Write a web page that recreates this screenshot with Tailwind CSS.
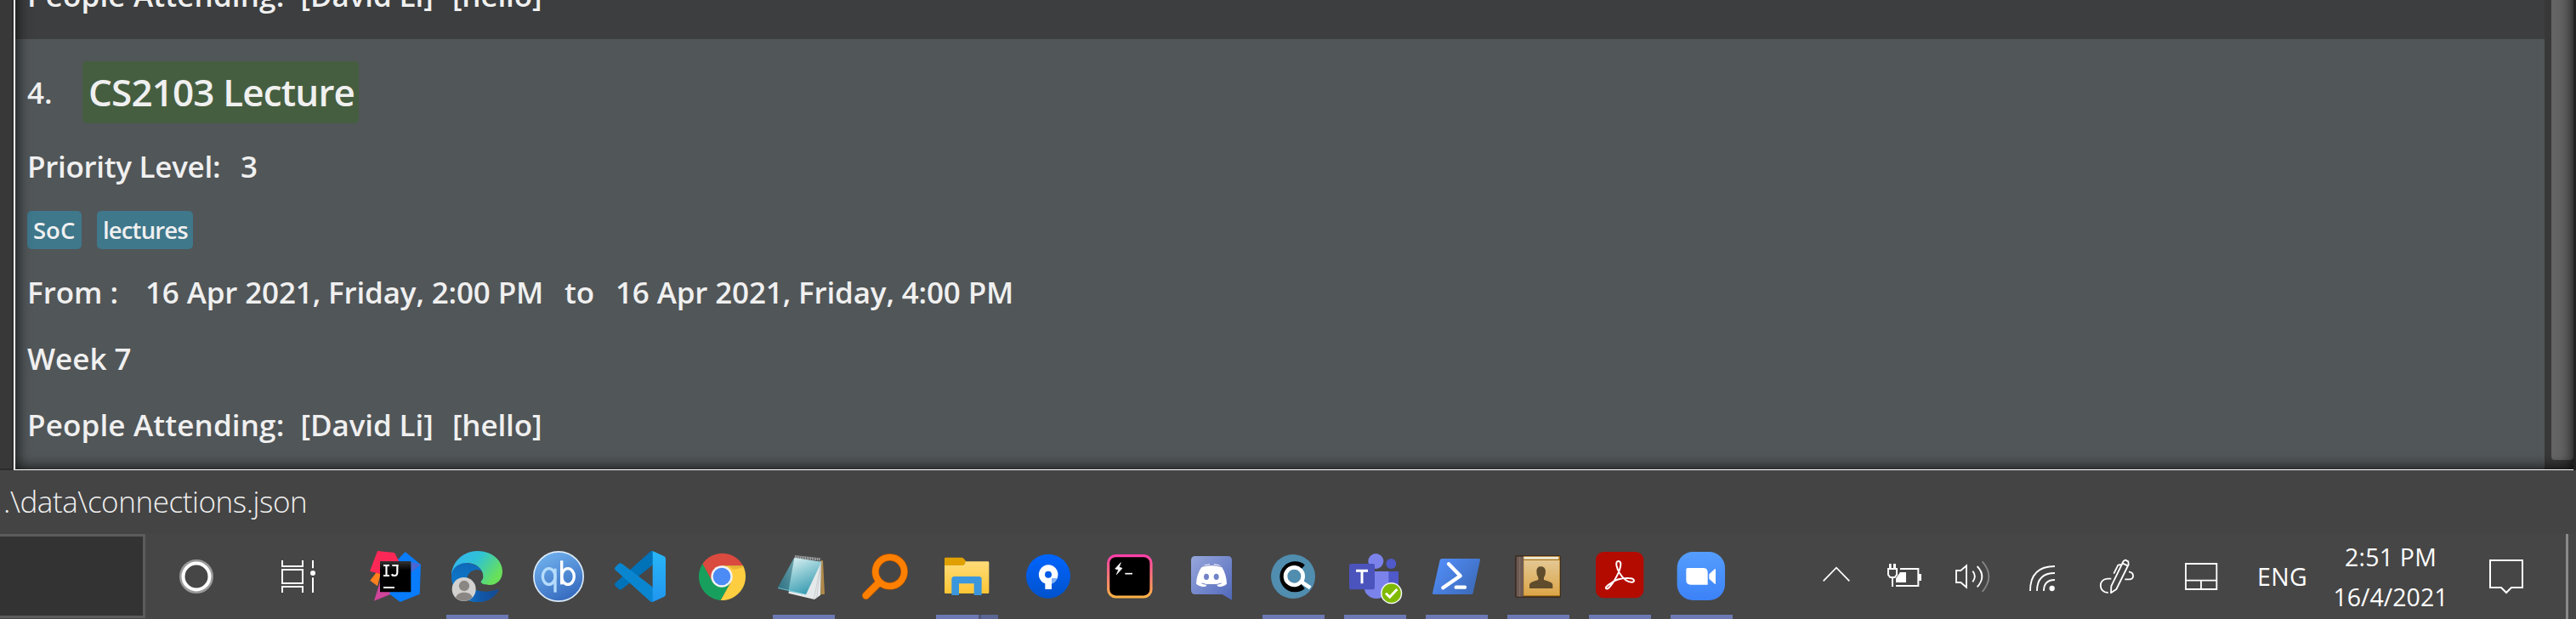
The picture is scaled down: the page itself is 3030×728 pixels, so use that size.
<!DOCTYPE html>
<html lang="en">
<head>
<meta charset="utf-8">
<title>Schedule</title>
<script src="https://cdn.jsdelivr.net/npm/@tailwindcss/browser@4"></script>
</head>
<body class="w-[3030px] h-[728px] overflow-hidden bg-[#444444] font-['Open_Sans','Noto_Sans',sans-serif] text-[#f0f0f0]">
<div class="flex flex-col w-[3030px] h-[728px]">

  <!-- Event list -->
  <main class="flex h-[553px] shrink-0 overflow-hidden">
    <div class="w-4 shrink-0 bg-[#383838] border-r-2 border-b-2 border-[#2c2c2c]"></div>
    <section class="relative flex w-[3011px] h-[553px] border-l-2 border-b border-white overflow-hidden font-semibold text-[35px] leading-[48px] whitespace-nowrap">
      <div class="w-[2975px] shrink-0">
        <div class="h-[46px] bg-[#3c3e3f] overflow-hidden pl-[14px]">
          <div class="flex -mt-[29px]"><span class="w-[321.5px] tracking-[0.15px]">People Attending:</span><span class="w-[178.5px] tracking-[-0.1px]">[David Li]</span><span class="tracking-[-0.15px]">[hello]</span></div>
        </div>
        <div class="h-[506px] bg-[#515658] pl-[14px] pt-[26px]">
          <div class="flex items-center h-[73px]"><span class="w-[65px]">4.</span><span class="h-[73px] w-[325px] rounded-[5px] bg-[#455e40] pl-[7px] text-[44px] leading-[73px] tracking-[-0.85px]">CS2103 Lecture</span></div>
          <div class="flex mt-[27px]"><span class="w-[251px] tracking-[-0.3px]">Priority Level:</span><span>3</span></div>
          <div class="flex mt-7 gap-[18px] text-[27.5px] leading-[45px]"><span class="w-16 h-[45px] rounded-[5px] bg-[#3f778b] pl-[7px]">SoC</span><span class="w-[113px] h-[45px] rounded-[5px] bg-[#3f778b] pl-[7px] tracking-[-0.85px]">lectures</span></div>
          <div class="flex mt-[27px]"><span class="w-[139px]">From :</span><span class="w-[493px] tracking-[-0.15px]">16 Apr 2021, Friday, 2:00 PM</span><span class="w-[60px]">to</span><span class="tracking-[-0.15px]">16 Apr 2021, Friday, 4:00 PM</span></div>
          <div class="flex mt-[30px]">Week 7</div>
          <div class="flex mt-[30px]"><span class="w-[321.5px] tracking-[0.15px]">People Attending:</span><span class="w-[178.5px] tracking-[-0.1px]">[David Li]</span><span class="tracking-[-0.15px]">[hello]</span></div>
        </div>
      </div>
      <div class="w-[34px] shrink-0 bg-[#383838] pl-2"><div class="w-[26px] h-[541px] rounded-b-[4px] bg-[#646464]"></div></div>
      <div class="absolute -top-10 bottom-0 left-0 right-0 shadow-[inset_0_0_16px_2px_rgba(0,0,0,0.75)]"></div>
    </section>
    <div class="w-[3px] bg-[#222222]"></div>
  </main>

  <!-- Status bar -->
  <footer class="flex items-center h-[75px] shrink-0 pl-1 bg-[#444444] text-[35px] font-light tracking-[-0.42px]">.\data\connections.json</footer>

  <!-- Taskbar -->
  <nav class="flex h-[100px] shrink-0 bg-[#464646] text-white">
    <div class="w-[171px] h-[99px] shrink-0 border-[3px] border-l-0 border-[#5c5c5c] bg-[#333333]"></div>
    <div class="flex w-[246px] shrink-0 pt-5">
      <svg class="ml-[30px] w-[60px] h-[60px] shrink-0" viewBox="0 0 60 60" fill="none"><circle cx="30" cy="30" r="18.5" stroke="#999" stroke-width="3"/><circle cx="30" cy="30" r="15.5" stroke="#fff" stroke-width="4"/></svg>
      <svg class="ml-[60px] w-[60px] h-[60px] shrink-0" viewBox="963 114 180 180" fill="none" stroke="#fff" stroke-width="6"><path d="M996 117v21h72v-21M996 150h72v48h-72zM996 231v-21h72v21M1104 117v28M1104 178v53" transform="translate(0 30)"/><circle cx="1104" cy="192" r="9" fill="#fff" stroke="none"/></svg>
    </div>

    <div class="flex shrink-0">
      <!-- IntelliJ IDEA -->
      <div class="flex flex-col items-center w-24 pt-5">
        <svg class="w-[60px] h-[60px]" viewBox="45 84 180 180"><defs><linearGradient id="ijb" x1="0" y1="0" x2="0" y2="1"><stop offset="0" stop-color="#333"/><stop offset=".3" stop-color="#000"/></linearGradient></defs>
        <path d="M68 160 46 188 72 208 84 160z" fill="#fc801d"/><path d="M82 190 60 260 125 234z" fill="#d0459c"/><path d="M170 87 225 132 221 236 152 264 115 236 140 118z" fill="#087cfa"/><path d="M72 84 132 90 158 140 84 166 45 155z" fill="#fe2857"/><path d="M190 122 225 132 190 160z" fill="#5a62c8" opacity=".8"/><path d="M81 120h109v109H81z" fill="url(#ijb)"/><path d="M93 135h21M93 171h21M103.500 135v36M124 135h22M142 135v24q0 12-10 12-7 0-10-5" fill="none" stroke="#fff" stroke-width="6.500"/><path d="M93 210h39v6H93z" fill="#fff"/></svg>
      </div>
      <!-- Edge -->
      <div class="flex flex-col items-center w-24 pt-5">
        <svg class="w-[60px] h-[60px]" viewBox="333 84 180 180"><defs><linearGradient id="ea" x1="0" y1="0" x2="1" y2=".5"><stop offset="0" stop-color="#35b1f5"/><stop offset=".5" stop-color="#2fc3d6"/><stop offset="1" stop-color="#68e05a"/></linearGradient><linearGradient id="eb" x1="0" y1="0" x2="0" y2="1"><stop offset="0" stop-color="#1068b8"/><stop offset="1" stop-color="#0a87dc"/></linearGradient><linearGradient id="ec" x1="0" y1="0" x2="1" y2="0"><stop offset="0" stop-color="#0b7bd8"/><stop offset=".5" stop-color="#1157a8"/><stop offset="1" stop-color="#154a92"/></linearGradient></defs>
        <path d="M333 172C330 140 352 124 385 126c30 2 52 16 56 30-24-12-56 4-50 34 6 40 60 50 108 28-12 30-42 46-74 46-52 0-92-40-92-92z" fill="url(#eb)"/><path d="M390 172c-10 38 30 58 68 55 20 0 35-8 41-8 2 0 1 3 0 5-14 26-42 40-74 40-20 0-48-14-52-46z" fill="url(#ec)"/><path d="M388 184c0-18 14-32 34-34 14 0 22 10 22 24 0 12-8 14-8 20 0 4 6 8 14 10-24 10-58 4-62-20z" fill="#454749"/><path d="M333 168c4-50 44-84 92-84 52 0 88 34 88 72 0 30-20 48-46 48-16 0-30-4-30-11 0-4 8-7 8-19 0-28-26-48-58-48-28 0-50 16-54 42z" fill="url(#ea)"/><circle cx="377" cy="219" r="42" fill="#d3d1cf"/><circle cx="378" cy="207" r="18.500" fill="#8a8683"/><path d="M348 248c4-12 16-18 30-18s26 6 29 18c-16 16-42 17-59 0z" fill="#8a8683"/></svg>
        <div class="mt-[15px] w-[73px] h-[5px] bg-[#6c79b4]"></div>
      </div>
      <!-- qBittorrent -->
      <div class="flex flex-col items-center w-24 pt-5">
        <svg class="w-[60px] h-[60px]" viewBox="621 84 180 180"><defs><linearGradient id="qb" x1=".2" y1="0" x2=".7" y2="1"><stop offset="0" stop-color="#72b3ef"/><stop offset="1" stop-color="#3468bd"/></linearGradient></defs><circle cx="711" cy="174" r="87.500" fill="url(#qb)" stroke="#dcebf8" stroke-width="5"/><g fill="none" stroke-width="10"><path d="M699 146v84" stroke="#b5dcfb"/><ellipse cx="677" cy="174" rx="22" ry="28" stroke="#b5dcfb"/><path d="M722 118v84" stroke="#fff"/><ellipse cx="744" cy="174" rx="22" ry="28" stroke="#fff"/></g></svg>
      </div>
      <!-- VS Code -->
      <div class="flex flex-col items-center w-24 pt-5">
        <svg class="w-[60px] h-[60px]" viewBox="39 84 180 180"><defs><linearGradient id="vs" x1="0" y1="0" x2="0" y2="1"><stop offset="0" stop-color="#29b6f6"/><stop offset="1" stop-color="#2196f0"/></linearGradient></defs><path d="M166 85q4-2 8 0v48L64 219q-5 4-10 0l-13-12q-4-5 0-10z" fill="#0072b8"/><path d="M41 151q-4-5 0-10l13-13q5-3 10 0l110 84v51q-4 2-8 0z" fill="#0a86d1"/><path d="M173 84 214 103q5 3 5 8v126q0 5-5 8l-41 19z" fill="url(#vs)"/></svg>
      </div>
      <!-- Chrome -->
      <div class="flex flex-col items-center w-24 pt-5">
        <svg class="w-[60px] h-[60px]" viewBox="327 84 180 180"><path d="M349 129 380 188 417 174 417 136 492 136A84 84 0 0 0 349 129z" fill="#db4a3f"/><path d="M349 129A84 84 0 0 0 413 258L446 200 417 174 384 192z" fill="#17a05d"/><path d="M492 136A84 84 0 0 1 413 258L450 192 417 136z" fill="#ffcd40"/><path d="M440 136h52l2 6-36 8z" fill="#d9a52c" opacity=".6"/><circle cx="417" cy="174" r="38" fill="#f3f3f3"/><circle cx="417" cy="174" r="31" fill="#4c8bf5"/></svg>
      </div>
      <!-- Notepad -->
      <div class="flex flex-col items-center w-24 pt-5">
        <svg class="w-[60px] h-[60px]" viewBox="615 84 180 180"><defs><linearGradient id="np" x1="0" y1="0" x2=".4" y2="1"><stop offset="0" stop-color="#e2f4f6"/><stop offset=".5" stop-color="#8cc9d3"/><stop offset="1" stop-color="#3f9fb4"/></linearGradient><linearGradient id="nq" x1="1" y1="0" x2="0" y2="1"><stop offset="0" stop-color="#a9cdd2"/><stop offset="1" stop-color="#1d5f70"/></linearGradient></defs><path d="M766 118 774 118 780 236 766 238z" fill="#b08a4a"/><path d="M768 120 765 240 744 255 652 233 660 205z" fill="#e6e9ea"/><path d="M768 124 742 254 M768 124 752 250" stroke="#b9c0c2" stroke-width="2"/><path d="M673 107 668 226 615 214z" fill="url(#nq)"/><path d="M673 107 769 122 714 238 652 226z" fill="url(#np)"/><path d="M673 107 652 226 617 218 615 212z" fill="#387f8f" opacity=".55"/><path d="M676 104 766 114" stroke="#c9cdcf" stroke-width="10" stroke-dasharray="3 3"/><path d="M615 214 714 238" stroke="#8bdbe9" stroke-width="2"/></svg>
        <div class="mt-[15px] w-[73px] h-[5px] bg-[#6c79b4]"></div>
      </div>
      <!-- Everything search -->
      <div class="flex flex-col items-center w-24 pt-5">
        <svg class="w-[60px] h-[60px]" viewBox="33 84 180 180" fill="none"><g stroke="#b35300" stroke-linecap="round"><path d="M56 241 101 196" stroke-width="28"/><circle cx="140" cy="157" r="51" stroke-width="26"/></g><g stroke="#ff8000" stroke-linecap="round"><path d="M56 241 101 196" stroke-width="24"/><circle cx="140" cy="157" r="51" stroke-width="22"/></g></svg>
      </div>
      <!-- File Explorer -->
      <div class="flex flex-col items-center w-24 pt-5">
        <svg class="w-[60px] h-[60px]" viewBox="321 84 180 180"><defs><linearGradient id="fe" x1="0" y1="0" x2="0" y2="1"><stop offset="0" stop-color="#ffdc78"/><stop offset="1" stop-color="#fcc535"/></linearGradient></defs><path d="M333 111q0-4 4-4h56q5 0 8 4l8 10-8 14h-68z" fill="#dfa000"/><path d="M333 135h62q5 0 8-4l5-10h78q4 0 4 4v105q0 4-4 4H337q-4 0-4-4z" fill="url(#fe)"/><path d="M358 240v-56q0-10 10-10h86q10 0 10 10v56h-27v-41h-53v41z" fill="#3a96dd"/></svg>
        <div class="mt-[15px] flex gap-[3px] w-[73px] h-[5px] bg-[#4d5478]"><div class="w-[50px] bg-[#6c79b4]"></div><div class="w-5 bg-[#5b6694]"></div></div>
      </div>
      <!-- Sourcetree -->
      <div class="flex flex-col items-center w-24 pt-5">
        <svg class="w-[60px] h-[60px]" viewBox="609 84 180 180"><defs><linearGradient id="st" x1="0" y1="0" x2="0" y2="1"><stop offset="0" stop-color="#0065ff"/><stop offset="1" stop-color="#0052cc"/></linearGradient></defs><circle cx="699" cy="173" r="78" fill="url(#st)"/><path d="M688 219v-20a34 34 0 1 1 23 0v20z" fill="#fff"/><path d="M711 180h20a34 34 0 0 1-20 20z" fill="#7fb0f8"/><circle cx="699" cy="167" r="12" fill="#005be6"/></svg>
      </div>
      <!-- Hyper -->
      <div class="flex flex-col items-center w-24 pt-5">
        <svg class="w-[60px] h-[60px]" viewBox="27 84 180 180"><defs><linearGradient id="hy" x1="0" y1="0" x2="0" y2="1"><stop offset="0" stop-color="#ff3fa8"/><stop offset="1" stop-color="#ffb347"/></linearGradient></defs><rect x="41" y="101" width="151" height="145" rx="26" fill="#000" stroke="url(#hy)" stroke-width="9.500"/><path d="M85 125 65 147 77 150 70 167 90 145 79 141z" fill="#fff" stroke="#fff" stroke-width="2"/><path d="M100 164h26" stroke="#fff" stroke-width="5"/></svg>
      </div>
      <!-- Discord -->
      <div class="flex flex-col items-center w-24 pt-5">
        <svg class="w-[60px] h-[60px]" viewBox="315 84 180 180"><defs><linearGradient id="dc" x1="0" y1="0" x2="1" y2="1"><stop offset="0" stop-color="#97a7dc"/><stop offset="1" stop-color="#5068bb"/></linearGradient></defs><path d="M348 102h114q15 0 15 15v140l-34-20h-95q-15 0-15-15V117q0-15 15-15z" fill="url(#dc)"/><path d="M372 138q10-7 26-8l2 4h12l2-4q16 1 26 8 18 28 19 62-10 10-30 10l-8-9h-30l-8 9q-20 0-32-10 1-34 21-62z" fill="#fff"/><path d="M368 140q36-12 74 0M370 198q36 12 70 0" stroke="#7384c4" stroke-width="3" fill="none"/><ellipse cx="387" cy="175" rx="9" ry="11" fill="#7083c8"/><ellipse cx="422" cy="175" rx="9" ry="11" fill="#7083c8"/></svg>
      </div>
      <!-- C search -->
      <div class="flex flex-col items-center w-24 pt-5">
        <svg class="w-[60px] h-[60px]" viewBox="603 84 180 180" fill="none"><circle cx="693" cy="174" r="78" fill="#508daf"/><path d="M728 141A44 44 0 1 0 728 209" stroke="#000" stroke-width="20"/><circle cx="697" cy="173" r="31" stroke="#fff" stroke-width="14" fill="#508daf"/><path d="M718 190 754 214" stroke="#fff" stroke-width="14"/></svg>
        <div class="mt-[15px] w-[73px] h-[5px] bg-[#6c79b4]"></div>
      </div>
      <!-- Teams -->
      <div class="flex flex-col items-center w-24 pt-5">
        <svg class="w-[64px] h-[60px] shrink-0" viewBox="885 84 192 180" overflow="visible"><circle cx="1039" cy="129" r="18" fill="#5059c9"/><path d="M1020 156h45v62q-10 20-45 14z" fill="#5059c9"/><circle cx="985" cy="120" r="27" fill="#7b83eb"/><path d="M944 156h86v56a43 40 0 0 1-86 0z" fill="#7b83eb"/><rect x="891" y="129" width="90" height="91" rx="7" fill="#4b53bc"/><path d="M915 154h42M936 154v45" stroke="#fff" stroke-width="9"/><circle cx="1040" cy="233" r="35.500" fill="#7fba00" stroke="#f4f4f4" stroke-width="4.500"/><path d="M1020 233 1034 247 1060 219" stroke="#fff" stroke-width="8.500" fill="none"/></svg>
        <div class="mt-[15px] w-[73px] h-[5px] bg-[#6c79b4]"></div>
      </div>
      <!-- PowerShell -->
      <div class="flex flex-col items-center w-24 pt-5">
        <svg class="w-[60px] h-[60px]" viewBox="69 84 180 180"><defs><linearGradient id="ps" x1="0" y1="0" x2="1" y2=".6"><stop offset="0" stop-color="#5391fe"/><stop offset="1" stop-color="#3e6dbf"/></linearGradient></defs><path d="M109 111h130q5 0 4 5l-25 116q-1 5-6 5H79q-5 0-4-5l26-116q2-5 8-5z" fill="url(#ps)"/><path d="M132 130 173 172 112 214M158 212h31" fill="none" stroke="#fff" stroke-width="13" stroke-linecap="round" stroke-linejoin="round"/></svg>
        <div class="mt-[15px] w-[73px] h-[5px] bg-[#6c79b4]"></div>
      </div>
      <!-- Address book -->
      <div class="flex flex-col items-center w-24 pt-5">
        <svg class="w-[60px] h-[60px]" viewBox="357 84 180 180"><defs><linearGradient id="ab" x1="0" y1="0" x2="0" y2="1"><stop offset="0" stop-color="#e3c793"/><stop offset="1" stop-color="#dca548"/></linearGradient></defs><rect x="366" y="99" width="162" height="150" rx="6" fill="#3a2c22"/><path d="M395 102h130v142H395z" fill="#a56f10"/><path d="M397 104h123v9H397z" fill="#f1ead9"/><path d="M397 117h126v124H397z" fill="url(#ab)"/><path d="M371 104h25v141h-25z" fill="#6d5a53"/><path d="M383 104v141" stroke="#867169" stroke-width="3"/><path d="M457 139q16 0 17 17 0 15-6 22v8q28 7 31 16v14h-82v-14q3-9 31-16v-8q-6-7-6-22 0-17 15-17z" fill="#5f4c2c"/></svg>
        <div class="mt-[15px] w-[73px] h-[5px] bg-[#6c79b4]"></div>
      </div>
      <!-- Acrobat -->
      <div class="flex flex-col items-center w-24 pt-5">
        <svg class="w-[60px] h-[60px]" viewBox="645 84 180 180"><rect x="651" y="87" width="169" height="163" rx="28" fill="#b30b00"/><path d="M731 120C718 120 724 146 737 165 748 182 764 194 778 194 790 194 790 180 768 180 744 179 718 186 704 198 690 208 684 212 687 216 693 222 706 206 718 186 732 162 740 142 739 128 738 122 735 120 731 120z" fill="none" stroke="#fff" stroke-width="6"/></svg>
        <div class="mt-[15px] w-[73px] h-[5px] bg-[#6c79b4]"></div>
      </div>
      <!-- Zoom -->
      <div class="flex flex-col items-center w-24 pt-5">
        <svg class="w-[60px] h-[60px]" viewBox="930 84 180 180"><defs><linearGradient id="zm" x1="0" y1="0" x2="0" y2="1"><stop offset="0" stop-color="#559dfd"/><stop offset="1" stop-color="#3c82f8"/></linearGradient></defs><rect x="935" y="87" width="169" height="171" rx="56" fill="url(#zm)"/><path d="M972 144h55q16 0 16 16v43h-60q-16 0-16-16v-38q0-5 5-5zM1048 166 1066 149q5-4 5 1v48q0 5-5 1l-18-17z" fill="#fff"/></svg>
        <div class="mt-[15px] w-[73px] h-[5px] bg-[#6c79b4]"></div>
      </div>
    </div>

    <!-- Notification area -->
    <div class="flex shrink-0 w-[981px] pl-[87px]">
      <svg class="mt-5 w-12 h-[60px] shrink-0" viewBox="48 84 144 180" fill="none" stroke="#fff" stroke-width="5"><path d="M74 190 120 143 166 190"/></svg>
      <svg class="ml-8 mt-5 w-12 h-[60px] shrink-0" viewBox="288 84 144 180" fill="none" stroke="#fff" stroke-width="6"><path d="M345 147h64v60h-79"/><path d="M411 165h9v24h-9z" fill="#fff" stroke="none"/><path d="M303 147h30v21l-7 9h-16l-7-9zM318 177v33"/><path d="M306 129h8v16h-8zM321 129h9v16h-9zM345 159h21v36h-36v-14z" fill="#fff" stroke="none"/></svg>
      <svg class="ml-8 mt-5 w-12 h-[60px] shrink-0" viewBox="528 84 144 180" fill="none" stroke="#fff" stroke-width="5.500"><path d="M543 153h16l20-17v76l-20-17h-16z"/><path d="M601 155q15 18 0 38M617 138q34 36 0 73"/><path d="M635 121q46 53 0 107" stroke="#858585"/></svg>
      <svg class="ml-8 mt-5 w-12 h-[60px] shrink-0" viewBox="768 84 144 180" fill="none" stroke="#fff" stroke-width="5.500"><path d="M804 225q0-87 87-87M828 225q0-63 63-63M852 225q0-39 39-39"/><circle cx="881" cy="216" r="9.500" fill="#fff" stroke="none"/></svg>
      <svg class="ml-10 mt-5 w-12 h-[60px] shrink-0" viewBox="1032 84 144 180" fill="none" stroke="#fff" stroke-width="5.500" stroke-linejoin="round"><path d="M1133 120 1140 116 1150 121 1151 132 1108 219 1089 232 1090 208zM1129 127 1148 136M1124 132 1114 134 1099 164M1090 182H1076C1042 184 1046 231 1079 231M1152 157C1172 160 1172 184 1154 184H1138"/></svg>
      <svg class="ml-[53px] mt-5 w-12 h-[60px] shrink-0" viewBox="1335 84 144 180" fill="none" stroke="#fff" stroke-width="5.500"><path d="M1353 129h109v90h-109zM1353 188h109M1407 188v31"/></svg>
      <div class="ml-[42px] w-[60px] h-[100px] shrink-0 text-[28.5px] leading-[101px] tracking-[0.3px]">ENG</div>
      <div class="ml-[22px] flex flex-col items-center w-[150px] shrink-0 pt-1 text-[28.5px] leading-[47px]"><span class="tracking-[0.2px]">2:51 PM</span><span>16/4/2021</span></div>
      <svg class="ml-[37px] mt-5 w-12 h-[60px] shrink-0" viewBox="972 84 144 180" fill="none" stroke="#fff" stroke-width="6"><path d="M987 117h114v96h-39l-18 18-18-18h-39z"/></svg>
      <div class="ml-[46px] w-[3px] shrink-0 bg-[#8a8a8a]"></div>
    </div>
  </nav>
</div>
</body>
</html>
